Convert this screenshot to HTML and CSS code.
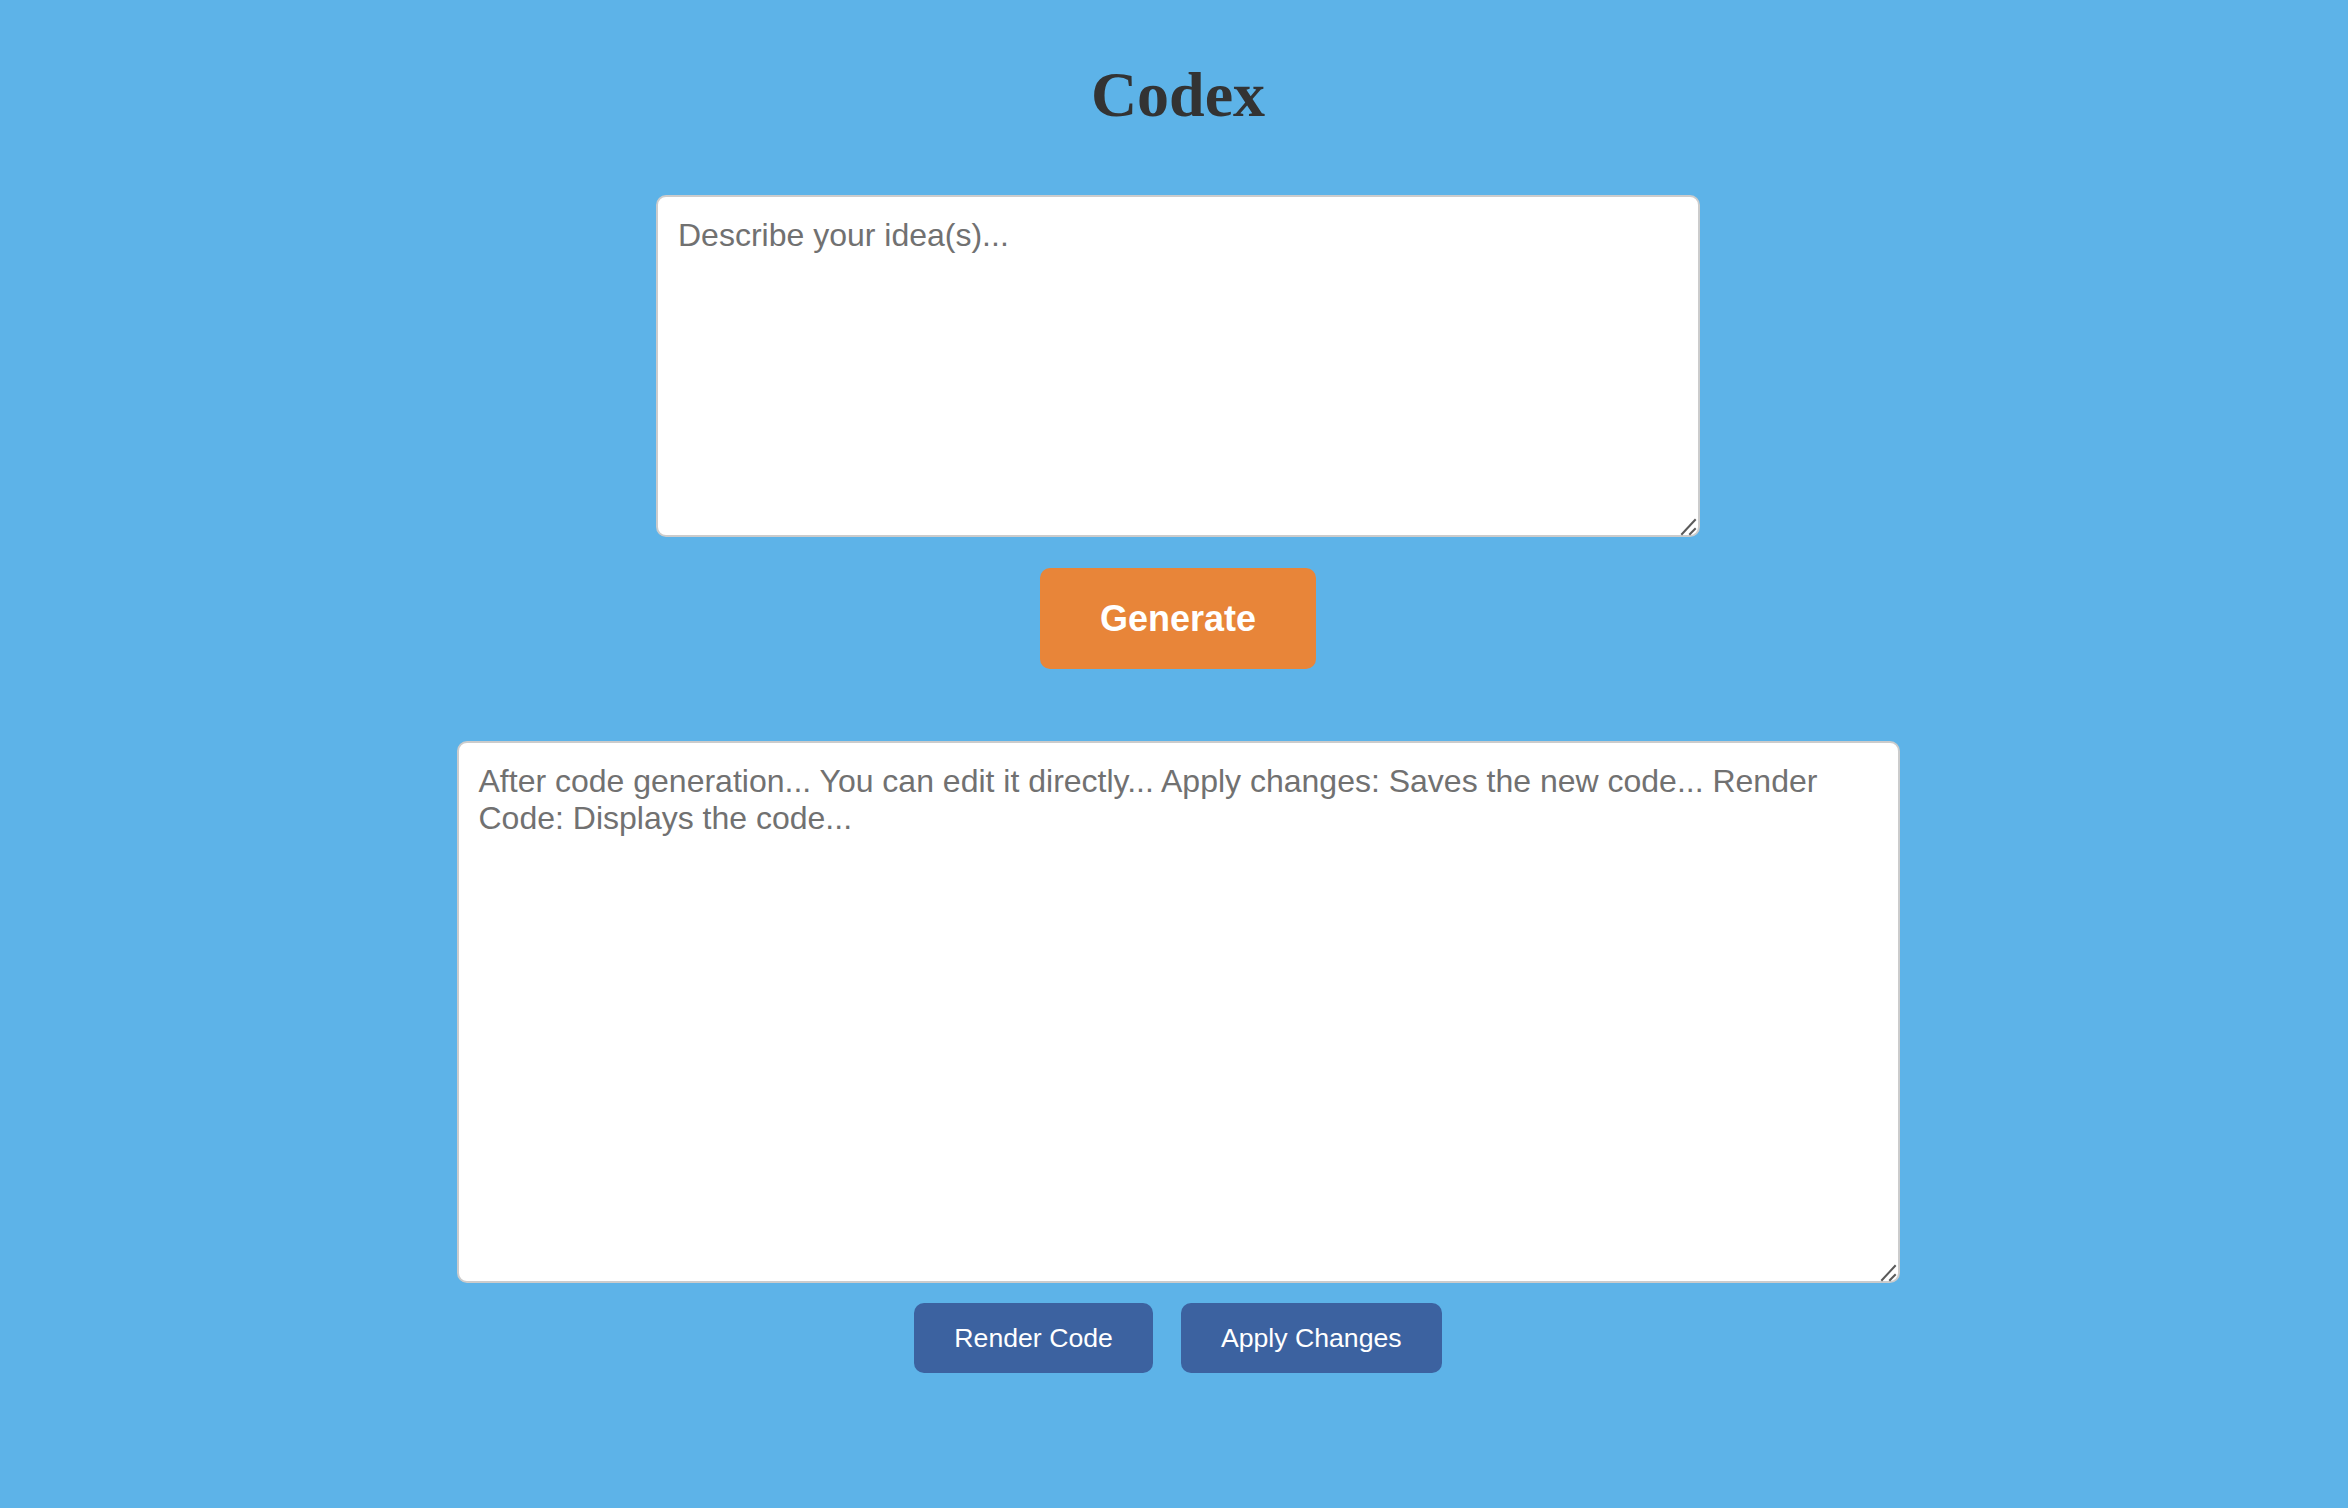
FILE: index.html
```html
<!DOCTYPE html>
<html lang="en">
<head>
<meta charset="utf-8">
<title>Codex</title>
<link rel="stylesheet" href="styles.css">
</head>
<body>
<main class="page">
  <h1 class="title">Codex</h1>
  <div class="field field-idea">
    <textarea class="idea" placeholder="Describe your idea(s)..."></textarea>
    <svg class="grip" width="20" height="20" viewBox="0 0 20 20" aria-hidden="true">
      <line x1="2" y1="17" x2="15" y2="3" />
      <line x1="10" y1="17" x2="15" y2="12" />
    </svg>
  </div>
  <button class="generate" type="button">Generate</button>
  <div class="field field-code">
    <textarea class="code" placeholder="After code generation... You can edit it directly... Apply changes: Saves the new code... Render Code: Displays the code..."></textarea>
    <svg class="grip" width="20" height="20" viewBox="0 0 20 20" aria-hidden="true">
      <line x1="2" y1="17" x2="15" y2="3" />
      <line x1="10" y1="17" x2="15" y2="12" />
    </svg>
  </div>
  <div class="actions">
    <button class="action" type="button">Render Code</button>
    <button class="action" type="button">Apply Changes</button>
  </div>
</main>
</body>
</html>
```
FILE: styles.css
```css
html, body {
  margin: 0;
  padding: 0;
  background: #5db3e8;
}
body {
  width: 2348px;
  height: 1508px;
  overflow: hidden;
}
.page {
  display: flex;
  flex-direction: column;
  align-items: center;
  padding-left: 8px;
}
.title {
  margin: 59px 0 0;
  font-family: "Liberation Serif", "Times New Roman", serif;
  font-weight: bold;
  font-size: 64px;
  line-height: 71px;
  color: #333333;
}
.field {
  position: relative;
}
.field-idea {
  margin-top: 65px;
}
.field-code {
  margin-top: 72px;
}
textarea {
  display: block;
  box-sizing: border-box;
  border: 2px solid #cccccc;
  border-radius: 10px;
  padding: 20px;
  background: #ffffff;
  font-family: "Liberation Sans", Arial, sans-serif;
  font-size: 32px;
  line-height: normal;
  color: #333333;
  outline: none;
  resize: none;
}
textarea::placeholder {
  color: #717171;
}
.grip {
  position: absolute;
  right: 0;
  bottom: 0;
  pointer-events: none;
}
.grip line {
  stroke: #5a5a5a;
  stroke-width: 2;
  stroke-linecap: square;
}
.idea {
  width: 1044px;
  height: 342px;
}
.generate {
  display: block;
  margin-top: 31px;
  box-sizing: border-box;
  height: 101px;
  padding: 0 60px;
  border: none;
  border-radius: 10px;
  background: #e88539;
  color: #ffffff;
  font-family: "Liberation Sans", Arial, sans-serif;
  font-weight: bold;
  font-size: 36px;
}
.code {
  width: 1443px;
  height: 542px;
}
.actions {
  display: flex;
  gap: 28px;
  margin-top: 20px;
}
.action {
  box-sizing: border-box;
  height: 70px;
  padding: 0 40px;
  border: none;
  border-radius: 10px;
  background: #3c62a0;
  color: #ffffff;
  font-family: "Liberation Sans", Arial, sans-serif;
  font-size: 26.67px;
}
```
